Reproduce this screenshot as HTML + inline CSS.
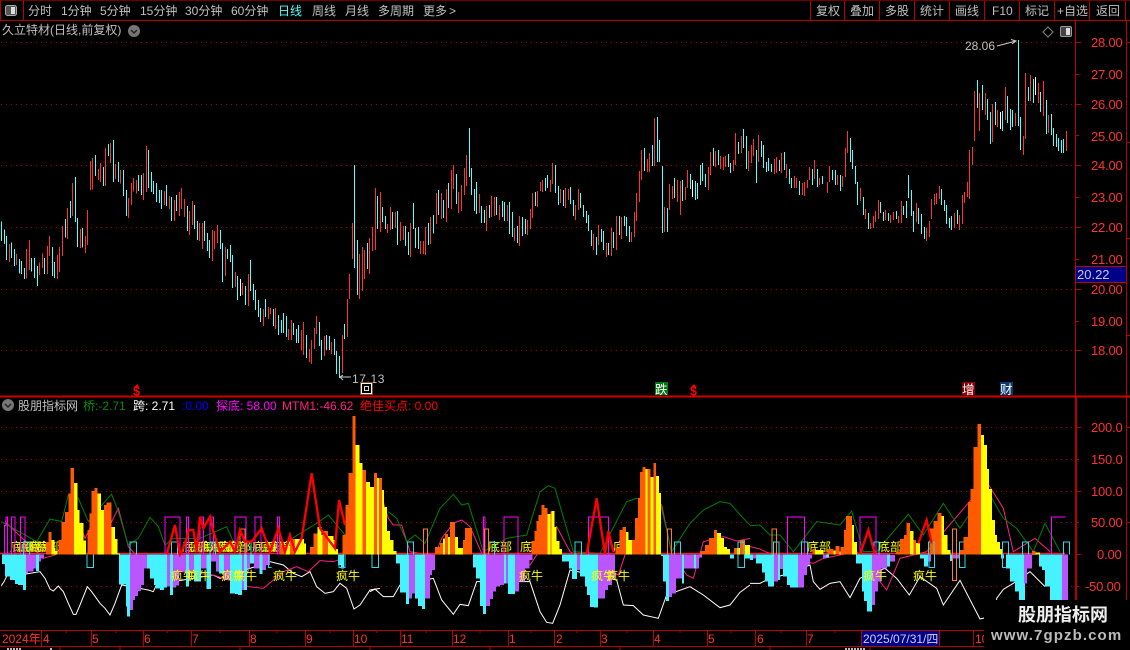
<!DOCTYPE html>
<html><head><meta charset="utf-8"><style>
html,body{margin:0;padding:0;background:#000;width:1130px;height:650px;overflow:hidden}
svg{display:block}
text{font-family:"Liberation Sans","WenQuanYi Zen Hei","Noto Sans CJK SC",sans-serif;font-size:12px}
.g{fill:#c0c0c0}.r{fill:#ff3232}.y{fill:#ffff00}
</style></head><body>
<svg width="1130" height="650" viewBox="0 0 1130 650" xmlns="http://www.w3.org/2000/svg">
<rect width="1130" height="650" fill="#000"/>
<!-- grid -->
<g stroke="#a00000" stroke-dasharray="1 4" fill="none">
<path d="M1 42.5H1075M1 104.5H1075M1 165.5H1075M1 227.5H1075M1 289.5H1075M1 350.5H1075M1 427.5H1075M1 459.5H1075M1 491.5H1075M1 522.5H1075M1 586.5H1075"/>
</g>
<!-- candles -->
<g fill="none" stroke-width="3" shape-rendering="crispEdges">
<g transform="translate(0,100) scale(.33333)">
<path stroke="#ff3232" d="M28 432V486M49 462V495M79 447V535M88 420V510M118 487V525M127 460V504M142 438V522M148 408V468M172 465V537M178 441V516M187 378V468M202 324V417M217 249V348M241 387V444M256 408V459M262 330V435M271 183V270M277 174V268M295 207V240M301 189V246M316 144V258M331 129V189M346 192V237M361 210V250M385 294V354M394 249V315M400 234V274M409 240V280M430 219V300M439 138V276M493 273V315M508 288V327M523 300V363M538 276V348M544 264V327M553 297V351M568 333V405M577 303V375M598 369V423M607 369V447M637 390V483M643 393V447M652 375V429M676 441V528M706 516V561M727 549V585M745 522V618M790 627V678M805 621V657M811 624V642M826 624V687M865 687V720M874 660V720M904 690V750M910 666V765M928 747V786M934 720V792M943 684V747M949 648V702M973 708V768M994 726V762M1027 705V819M1042 597V711M1048 522V597M1057 369V477M1078 462V597M1087 441V573M1093 450V537M1108 414V522M1117 381V453M1126 264V450"/>
<path stroke="#54ffff" d="M4 364V423M13 388V432M19 408V480M34 427V474M43 447V498M58 477V520M64 483V522M73 504V537M94 474V514M103 474V534M112 498V558M133 474V522M157 441V528M163 486V534M196 357V412M211 303V354M226 231V366M232 354V441M247 384V442M286 165V228M310 201V258M325 132V168M340 120V246M355 186V246M370 210V288M379 270V348M415 225V273M424 225V285M445 150V264M454 216V276M460 243V282M469 249V306M478 270V309M484 270V327M499 255V318M514 291V363M529 285V333M562 318V393M583 315V387M592 363V420M613 363V423M622 399V453M628 420V474M661 390V447M667 429V546M682 447V477M691 435V486M697 465V564M712 528V600M736 558V615M751 480V573M760 552V600M766 570V630M775 600V651M781 624V666M796 597V651M820 627V678M835 645V705M844 660V699M850 639V699M859 648V711M880 669V705M889 687V729M895 675V729M919 705V774M958 666V738M964 720V780M979 705V750M988 708V750M1003 717V765M1009 753V822M1018 768V834M1033 672V717M1063 195V504M1072 420V585M1102 429V507M1132 288V387"/>
<path stroke="#fff" d="M721 537V588"/>
</g>
<g transform="translate(370,100) scale(.33333)">
<path stroke="#ff3232" d="M31 276V396M52 372V399M61 321V390M76 336V384M91 366V423M100 378V420M121 369V471M151 423V462M160 423V462M166 381V465M181 351V432M199 279V372M214 279V357M229 267V366M244 210V327M250 195V267M265 276V339M274 255V333M283 204V285M289 165V258M328 282V339M349 318V393M364 288V351M373 291V348M388 315V360M412 315V363M433 384V423M448 348V438M472 360V405M481 327V387M487 279V354M502 273V321M511 246V273M517 240V276M541 240V276M547 189V252M571 267V309M586 264V324M595 267V300M616 315V360M625 267V330M670 402V450M685 375V435M709 429V471M724 384V468M739 348V450M754 351V417M784 396V426M793 336V411M799 279V363M808 213V306M814 150V240M832 177V216M838 159V216M853 54V198M883 321V396M898 252V330M907 258V297M922 240V306M931 243V345M946 261V300M952 210V264M1015 201V270M1021 156V225M1036 153V201M1051 168V207M1060 171V210M1066 168V201M1090 180V213M1096 99V195M1114 108V159M1135 153V213"/>
<path stroke="#54ffff" d="M37 321V366M46 348V387M67 336V387M82 333V435M106 378V438M115 396V465M130 309V387M136 384V444M145 381V447M175 369V435M190 345V400M205 270V345M220 300V354M235 249V324M259 222V312M298 84V231M304 204V285M313 267V333M319 246V342M334 318V369M343 330V369M358 315V354M379 291V345M397 303V351M403 306V363M418 306V402M427 336V411M442 378V429M457 351V408M466 357V402M496 276V318M526 234V273M532 225V264M556 195V279M565 258V315M580 270V318M601 261V312M610 300V348M631 279V324M640 315V351M649 333V369M655 345V393M664 390V438M679 411V465M694 387V426M700 393V450M715 429V465M730 396V444M748 348V405M763 348V378M769 351V408M778 378V426M823 144V213M847 135V198M862 51V186M868 120V186M877 198V399M892 324V396M913 234V294M937 240V303M961 222V267M976 243V300M982 249V297M991 195V255M997 189V243M1006 222V261M1030 144V198M1045 150V195M1075 162V201M1081 189V219M1105 126V162M1120 87V144M1129 108V207"/>
<path stroke="#fff" d="M967 240V291"/>
</g>
<g transform="translate(750,100) scale(.33333)">
<path stroke="#ff3232" d="M4 135V189M10 117V168M25 105V186M73 177V222M79 171V219M94 159V219M109 192V234M133 228V264M139 234V264M157 249V285M163 246V288M172 240V264M178 201V240M193 180V237M208 234V255M232 246V279M238 198V246M262 225V255M277 228V261M286 144V231M292 93V159M331 264V303M346 327V357M361 369V387M370 348V384M376 333V366M385 300V357M406 330V360M421 345V369M430 336V360M445 348V369M454 303V369M499 309V366M529 384V423M538 363V411M544 297V357M553 282V315M559 279V312M568 258V297M613 339V384M628 345V390M637 285V372M643 276V309M652 246V291M658 150V297M667 141V195M673 0V123"/>
<path stroke="#54ffff" d="M19 150V249M34 123V171M40 135V204M49 186V216M55 174V213M64 192V216M88 180V213M103 156V210M118 207V252M124 234V264M148 243V285M187 207V255M202 207V261M217 228V252M247 210V240M256 210V255M271 225V273M301 114V186M307 150V207M316 198V252M322 246V315M340 291V345M355 339V387M391 306V339M400 336V363M415 339V363M439 333V357M460 318V345M469 303V354M475 225V294M484 270V348M490 333V396M505 324V372M514 342V402M523 381V417M574 267V315M583 300V333M589 315V372M598 354V384M604 348V390M622 330V372"/>
</g>
<g transform="translate(960,30) scale(.33333)">
<path stroke="#ff3232" d="M44 183V333M58 189V303M76 189V255M97 222V336M112 240V291M136 171V270M166 249V288M190 318V375M196 129V327M211 135V213M235 159V219M250 153V258M265 255V309M319 303V363"/>
<path stroke="#54ffff" d="M52 150V234M67 165V240M82 207V270M91 246V342M106 216V285M127 243V303M142 198V279M151 237V300M157 240V291M175 30V288M181 261V360M205 171V213M220 147V219M241 186V246M259 210V312M274 252V315M280 294V348M289 312V351M295 324V363M304 330V369M310 327V369"/>
<path stroke="#fff" d="M121 246V297M226 141V195"/>
</g>
</g>
<!-- sub-panel underlay lines -->
<g fill="none" stroke-width="3">
<g transform="translate(0,395) scale(.33333)">
<path stroke="#ffffff" d="M4 572L12 560L22 540L60 540L120 530L135 550L150 582L160 588L175 573L190 590L205 625L220 658L228 658L240 630L262 575L275 590L300 625L315 640L330 660L345 625L365 570L445 585L460 590L470 568L640 540L660 550L810 500L850 510L880 535L905 545L930 530L950 575L975 595L1000 590L1020 565L1040 580L1062 642L1080 630L1110 585L1140 580"/>
<path stroke="#ff2080" d="M15 380L130 490L165 480L240 390L255 430L270 400L330 390L355 340L385 455L435 510L450 520L640 540L745 575L790 580L850 530L890 515L925 530L960 497L1000 500L1030 490"/>
<path stroke="#008000" d="M5 380L110 440L150 372L185 380L205 300L235 310L265 380L310 325L335 298L355 350L385 450L415 430L450 367L475 395L495 450L520 430L600 430L680 395L700 440L800 470L860 440L950 385L985 360L1035 420L1140 350"/>
</g>
<g transform="translate(370,395) scale(.33333)">
<path stroke="#ffffff" d="M0 590L15 582L40 605L70 605L90 570L190 550L215 615L250 658L270 628L295 632L320 560L480 560L510 650L530 682L548 685L570 630L600 525L740 555L760 630L790 632L820 660L865 670L890 600L960 575L1000 600L1050 638L1080 630L1110 592L1140 570"/>
<path stroke="#ff2080" d="M30 290L55 370L70 390L95 390L120 470L150 475L195 480L215 430L250 385L275 375L300 395L320 440L335 475L480 510L500 480L560 395L600 470L745 540L765 480L875 330L905 475L950 540L970 550L1000 440L1060 425L1100 438L1140 430"/>
<path stroke="#008000" d="M55 350L80 370L110 440L135 420L165 445L210 340L250 298L275 330L295 325L340 470L410 430L470 420L510 290L535 272L555 280L610 470L690 475L770 320L800 310L870 320L905 470L960 385L1000 345L1050 320L1080 325L1120 370L1140 390"/>
</g>
<g transform="translate(750,395) scale(.33333)">
<path stroke="#ffffff" d="M0 565L30 565L50 555L100 540L180 510L190 560L210 583L240 565L270 560L300 608L330 550L405 520L440 550L478 600L510 545L560 580L580 630L630 556L690 672L740 660L740 610L760 583L790 565L840 530L885 575"/>
<path stroke="#ff2080" d="M0 455L30 462L50 472L190 505L220 490L320 470L410 585L450 490L530 470L710 260L760 340L790 470L855 430L900 470"/>
<path stroke="#008000" d="M0 392L30 390L60 420L90 420L130 470L200 380L270 390L305 348L340 470L380 470L430 410L475 358L520 420L580 325L630 400L660 355L720 300L760 370L800 400L850 470L885 385L930 470"/>
</g>
</g>
<path d="M0 553.5H1065" stroke="#e8203c" stroke-width="1.5"/>
<!-- 底部 labels -->
<g class="y" fill="#ffff00">
<text x="10" y="551">底部</text><text x="18" y="551">底部</text><text x="29" y="551">底部</text><text x="37" y="551">底部</text>
<text x="182" y="551">底部</text><text x="190" y="551">底部</text><text x="200" y="551">底部</text><text x="210" y="551">底部</text><text x="218" y="551">底部</text><text x="227" y="551">底部</text>
<text x="252" y="551">底部</text><text x="260" y="551">底部</text><text x="267" y="551">底部</text><text x="280" y="551">底部</text>
<text x="488" y="551">底部</text><text x="520" y="551">底部</text><text x="613" y="551">底部</text><text x="807" y="551">底部</text><text x="878" y="551">底部</text>
</g>
<!-- bars -->
<g shape-rendering="crispEdges">
<g transform="translate(0,395) scale(.33333)">
<path fill="#ff5a00" d="M138 478V441H145V411H154V478zM175 478V435H185V381H195V351H205V295H212V219H222V478zM262 478V405H268V355H275V288H283V279H292V478zM312 478V330H320V322H335V478zM930 478V456H940V415H952V478zM840 478V450H853V478zM870 478V432H885V478zM968 478V408H984V478zM1028 478V420H1037V330H1046V234H1058V63H1067V478zM1088 478V225H1098V478zM1116 478V290H1122V234H1131V478z"/>
<path fill="#ffff00" d="M154 478V435H163V468H172V478zM222 478V264H232V345H238V384H250V437H258V478zM292 478V295H303V345H312V478zM335 478V396H345V432H352V475H360V478zM853 478V452H870V478zM885 478V432H912V445H918V478zM952 478V396H965V420H968V478zM984 478V423H1000V435H1006V462H1014V478zM1067 478V150H1078V204H1088V478zM1098 478V261H1110V279H1116V478zM1131 478V255H1140V478z"/>
<path fill="#46f2ff" d="M6 478V507H15V545H30V555H45V567H54V570H69V585H78V478zM108 478V528H117V478zM357 478V568H378V635H381V665H390V478zM441 478V520H450V550H462V570H468V580H480V585H492V578H501V478zM510 478V600H519V478zM558 478V575H567V478zM582 478V560H603V478zM620 478V582H633V478zM657 478V535H672V478zM690 478V595H705V597H714V600H726V478zM732 478V585H741V478zM750 478V505H762V478zM778 478V537H787V478zM1014 478V510H1023V520H1032V478z"/>
<path fill="#bb55ff" d="M78 478V535H84V530H100V520H108V478zM117 478V500H123V490H132V478zM390 478V645H399V615H405V603H414V588H423V570H432V520H441V478zM501 478V574H510V478zM519 478V578H528V572H537V530H558V478zM567 478V530H582V478zM603 478V520H620V478zM633 478V500H648V530H657V478zM672 478V555H690V478zM726 478V585H732V478zM741 478V520H750V478zM762 478V520H778V478zM787 478V525H798V510H810V478z"/>
</g>
<g transform="translate(370,395) scale(.33333)">
<path fill="#ff5a00" d="M12 478V234H21V478zM27 478V249H36V478zM195 478V456H210V444H219V478zM225 478V417H234V478zM240 478V381H255V478zM279 478V435H285V399H306V478zM485 478V438H494V408H500V378H506V360H514V330H523V339H532V478zM541 478V350H545V478zM737 478V459H749V405H758V396H768V478zM786 478V435H795V369H804V309H810V231H818V216H827V478zM833 478V222H842V478zM850 478V204H858V478zM990 478V468H1005V450H1017V429H1032V405H1041V478zM1092 478V459H1101V478zM1110 478V435H1125V478z"/>
<path fill="#ffff00" d="M0 478V276H12V478zM21 478V249H27V478zM36 478V285H42V336H51V408H60V435H70V468H79V478zM219 478V430H225V478zM234 478V426H240V478zM255 478V426H264V459H279V478zM532 478V357H541V478zM545 478V348H553V396H559V438H568V462H576V478zM768 478V411H776V435H786V478zM827 478V222H833V478zM842 478V246H850V478zM858 478V243H867V294H873V478zM1041 478V414H1053V429H1062V456H1071V462H1080V478zM1101 478V459H1110V478zM1125 478V450H1140V478z"/>
<path fill="#46f2ff" d="M78 478V505H90V592H108V627H117V478zM135 478V610H144V633H156V642H165V478zM309 478V518H318V550H330V633H339V657H348V478zM402 478V565H408V478zM414 478V597H435V478zM576 478V500H597V520H606V552H621V478zM630 478V545H645V575H651V600H660V636H672V638H684V478zM873 478V483H879V560H888V618H897V478zM936 478V566H942V478zM972 478V520H978V478zM1080 478V490H1092V478zM1125 478V490H1140V478z"/>
<path fill="#bb55ff" d="M117 478V610H126V595H135V478zM165 478V610H180V540H186V525H195V478zM348 478V633H360V612H369V590H378V575H390V570H402V478zM408 478V565H414V478zM435 478V590H447V560H465V520H478V495H487V478zM621 478V525H630V478zM684 478V610H705V585H714V570H726V550H735V478zM897 478V606H906V596H918V550H936V478zM942 478V520H972V478zM978 478V520H987V488H996V478z"/>
</g>
<g transform="translate(750,395) scale(.33333)">
<path fill="#ff5a00" d="M188 478V462H195V478zM232 478V462H250V478zM256 478V453H268V478zM272 478V456H282V405H288V363H306V478zM438 478V470H450V432H462V420H470V384H480V478zM490 478V435H498V478zM538 478V400H550V378H562V354H574V478zM630 478V465H640V426H654V321H662V282H670V156H682V87H693V478zM846 478V468H856V478z"/>
<path fill="#ffff00" d="M195 478V465H220V478zM250 478V466H256V478zM268 478V470H272V478zM306 478V390H312V441H321V478zM480 478V408H490V478zM498 478V444H510V478zM574 478V363H582V420H592V465H602V478zM693 478V120H702V150H711V222H717V282H726V375H735V420H741V441H750V462H756V478zM856 478V472H870V478z"/>
<path fill="#46f2ff" d="M0 478V495H9V478zM18 478V505H36V532H45V560H54V575H72V478zM84 478V555H90V478zM99 478V545H111V570H120V578H144V478zM228 478V488H237V478zM318 478V505H336V590H342V618H351V650H366V478zM411 478V515H420V478zM510 478V490H522V515H534V478zM600 478V498H609V478zM753 478V490H762V478zM768 478V520H780V560H795V590H807V615H825V478zM867 478V515H876V525H885V575H900V615H936V478z"/>
<path fill="#bb55ff" d="M9 478V490H18V478zM72 478V560H84V478zM90 478V522H99V478zM144 478V578H162V540H171V510H180V490H186V478zM219 478V490H228V478zM366 478V630H375V590H384V560H393V520H411V478zM420 478V500H435V480H420zM534 478V500H543V478zM609 478V490H627V478zM822 478V565H831V520H846V480H858V478zM936 478V615H954V478z"/>
</g>
</g>
<!-- outlines -->
<g fill="none" stroke-width="3" shape-rendering="crispEdges">
<g transform="translate(0,395) scale(.33333)">
<path stroke="#ff00ff" d="M14 478V392H18V366H22V478M34 478V366H45V478M62 478V366H75V478M495 478V366H540V478M560 478V366H565V478M600 478V366H610V478M630 478V366H640V478M705 478V366H738V478M765 478V366H783V478M833 478V366H838V478"/>
<path stroke="#2cdce8" d="M70 478V441H88V478M390 478V441H410V478M514 478V441H533V478M630 478V441H646V478M735 478V441H753V478M261 478V517H281V478M805 478V517H815M1017 478V517H1035V478M1116 478V517H1135V478"/>
<path stroke="#ff7f27" d="M720 478V402H735V478"/>
</g>
<g transform="translate(370,395) scale(.33333)">
<path stroke="#ff00ff" d="M340 478V366H345V478M402 478V366H444V478M655 478V366H716V478"/>
<path stroke="#2cdce8" d="M6 478V517H26V478M112 478V441H131V478M355 478V441H374V478M615 478V441H634V478M913 478V441H932V478M1104 478V441H1122V478M1104 478V517H1124V478"/>
<path stroke="#ff7f27" d="M160 478V402H172V478M343 478V402H355V478M892 478V402H904V478"/>
</g>
<g transform="translate(750,395) scale(.33333)">
<path stroke="#ff00ff" d="M112 478V366H163V478M330 478V366H378V478M905 478V366H946"/>
<path stroke="#2cdce8" d="M70 478V441H87V478M155 478V441H172V478M372 478V441H387V478M535 478V441H552V478M628 478V441H640M628 478V517H645V478M537 478V517H554V478M757 478V441H775V478M757 478V517H770M817 478V441H835V478M940 478V441H958V478"/>
<path stroke="#ff7f27" d="M66 478V402H80V478M607 402H620V556H607z"/>
</g>
</g>
<!-- red signal line -->
<g fill="none" stroke="#ff0000" stroke-width="7">
<g transform="translate(0,395) scale(.33333)">
<path d="M500 478L525 390L540 478L545 470L560 430L565 405L580 405L590 470L600 365L610 400L630 365L640 410L660 470L690 440L705 470L720 405L735 440L755 440L785 400L810 470L835 400L855 470L870 420L885 470L905 430L935 235L960 400L1005 460L1017 315L1035 390"/>
</g>
<g transform="translate(370,395) scale(.33333)">
<path d="M650 478L680 310L705 478L715 408L730 470"/>
</g>
<g transform="translate(750,395) scale(.33333)">
<path d="M330 478L355 405L375 478M505 445L530 375L545 445"/>
</g>
</g>
<!-- 疯牛 -->
<g fill="#ffff00">
<text x="171" y="580">疯牛</text><text x="187" y="580">疯牛</text><text x="221" y="580">疯牛</text><text x="233" y="580">疯牛</text><text x="273" y="580">疯牛</text><text x="336" y="580">疯牛</text>
<text x="519" y="580">疯牛</text><text x="591" y="580">疯牛</text><text x="606" y="580">疯牛</text><text x="863" y="580">疯牛</text><text x="913" y="580">疯牛</text>
</g>
<!-- frame -->
<g fill="none" stroke="#b80000" shape-rendering="crispEdges">
<path d="M0 20.5H1130M23.5 0V20.5M810.5 0V20.5M844.5 0V20.5M879.5 0V20.5M914.5 0V20.5M949.5 0V20.5M984.5 0V20.5M1019.5 0V20.5M1054.5 0V20.5M1089.5 0V20.5M1125.5 0V20.5M.5 0V20.5"/>
<path d="M1075.5 21V646M1126.5 21V650M1076.5 396V646M0 630.5H1130M0 646.5H1130"/>
<path d="M0 396.5H1130" stroke-width="2" stroke="#d00000"/>
<path d="M0 .5H1130" stroke="#700000"/>
<path d="M41.5 630V646M91.5 630V646M143.5 630V646M191.5 630V646M249.5 630V646M305.5 630V646M353.5 630V646M400.5 630V646M452.5 630V646M508.5 630V646M554.5 630V646M600.5 630V646M653.5 630V646M707.5 630V646M755.5 630V646M806.5 630V646M861.5 630V646M939.5 630V646M973.5 630V646"/>
<path d="M66 630V633M116 630V633M167 630V633M220 630V633M277 630V633M330 630V633M377 630V633M426 630V633M480 630V633M531 630V633M577 630V633M627 630V633M680 630V633M731 630V633M781 630V633M835 630V633M900 630V633M1000 630V633M60 646V650M120 646V650M240 646V650M370 646V650M490 646V650M620 646V650M770 646V650M870 646V650"/>
<path d="M1075 42.5H1081M1075 74.5H1079M1075 104.5H1081M1075 135.5H1079M1075 165.5H1081M1075 197.5H1079M1075 227.5H1081M1075 259.5H1079M1075 289.5H1081M1075 321.5H1079M1075 350.5H1081M1075 427.5H1081M1075 459.5H1079M1075 491.5H1081M1075 522.5H1079M1075 554.5H1081M1075 586.5H1079"/>
<path d="M1127 42.5H1130M1127 142.5H1130M1127 238.5H1130M1127 335.5H1130M1127 427.5H1130M1127 522.5H1130"/>
</g>
<!-- price box -->
<rect x="1075.5" y="266.5" width="51" height="16" fill="#000088" stroke="#c00000"/>
<text x="1077" y="279" fill="#c8c8e8" style="font-size:13px">20.22</text>
<!-- axis labels -->
<g class="r" style="letter-spacing:-.2px">
<text x="1091" y="47" style="font-size:13px">28.00</text><text x="1091" y="79" style="font-size:13px">27.00</text><text x="1091" y="109" style="font-size:13px">26.00</text><text x="1091" y="141" style="font-size:13px">25.00</text><text x="1091" y="170" style="font-size:13px">24.00</text><text x="1091" y="202" style="font-size:13px">23.00</text><text x="1091" y="232" style="font-size:13px">22.00</text><text x="1091" y="264" style="font-size:13px">21.00</text><text x="1091" y="294" style="font-size:13px">20.00</text><text x="1091" y="326" style="font-size:13px">19.00</text><text x="1091" y="355" style="font-size:13px">18.00</text>
<text x="1091" y="432" style="font-size:13px">200.0</text><text x="1091" y="464" style="font-size:13px">150.0</text><text x="1091" y="496" style="font-size:13px">100.0</text><text x="1091" y="527" style="font-size:13px">50.00</text><text x="1097" y="559" style="font-size:13px">0.00</text><text x="1085" y="591" style="font-size:13px">-50.00</text>
</g>
<!-- top toolbar -->
<rect x="5.5" y="5.5" width="11" height="10" rx="2" fill="#555" stroke="#aaa"/><rect x="11" y="7" width="4" height="7" fill="#ddd"/>
<g class="g">
<text x="28" y="15">分时</text><text x="61" y="15">1分钟</text><text x="100" y="15">5分钟</text><text x="140" y="15">15分钟</text><text x="185" y="15">30分钟</text><text x="231" y="15">60分钟</text>
<text x="278" y="15" style="fill:#54ffff">日线</text><text x="312" y="15">周线</text><text x="345" y="15">月线</text><text x="378" y="15">多周期</text><text x="423" y="15">更多</text><text x="449" y="15">&gt;</text>
<text x="816" y="15">复权</text><text x="850" y="15">叠加</text><text x="885" y="15">多股</text><text x="920" y="15">统计</text><text x="955" y="15">画线</text><text x="992" y="15">F10</text><text x="1025" y="15">标记</text><text x="1057" y="15">+自选</text><text x="1096" y="15">返回</text>
<text x="2" y="34">久立特材(日线,前复权)</text>
</g>
<circle cx="134" cy="31" r="6" fill="#777"/><path d="M131 30l3 3 3-3" stroke="#222" stroke-width="1.4" fill="none"/>
<path d="M1048 27l5 5-5 5-5-5z" fill="none" stroke="#888"/>
<rect x="1060.5" y="26.5" width="11" height="10" rx="1.5" fill="#444" stroke="#999"/><rect x="1066" y="28" width="4" height="7" fill="#ddd"/>
<!-- annotations -->
<text x="965" y="50" class="g">28.06</text>
<path d="M997 46L1016 41M1011 39.5l5 1.5-4 3" stroke="#ccc" fill="none"/>
<text x="352" y="383" class="g" style="letter-spacing:.6px">17.13</text>
<path d="M340 377H351M343 375l-3 2 3 3" stroke="#ccc" fill="none"/>
<!-- markers -->
<rect x="360" y="382" width="13" height="13" fill="#8a4a10"/><rect x="361.5" y="383.5" width="10" height="10" fill="#000" stroke="#fff"/><rect x="364.5" y="386.5" width="4" height="4" fill="none" stroke="#ddd"/>
<path d="M137 384l2.5 3h-5zM694 384l2.5 3h-5z" fill="#ff0000"/>
<text x="133" y="395.5" style="fill:#ff0000;font-size:12.5px;font-weight:bold">$</text>
<text x="690" y="395.5" style="fill:#ff0000;font-size:12.5px;font-weight:bold">$</text>
<rect x="655" y="382" width="13" height="13" fill="#007a10"/><text x="655" y="394" style="fill:#fff;font-size:12.5px">跌</text>
<rect x="962" y="382" width="13" height="13" fill="#8a0000"/><text x="962" y="394" style="fill:#fff;font-size:12.5px">增</text>
<rect x="1000" y="382" width="13" height="13" fill="#0a3a70"/><text x="1000" y="394" style="fill:#fff;font-size:12.5px">财</text>
<!-- sub-panel header -->
<circle cx="8" cy="405" r="6" fill="#777"/><path d="M5 404l3 3 3-3" stroke="#222" stroke-width="1.4" fill="none"/>
<text x="18" y="410" class="g">股朋指标网</text>
<text x="83" y="410" fill="#008a00">桥:-2.71</text>
<text x="133" y="410" fill="#fff">跨: 2.71</text>
<text x="182" y="410" fill="#0000ff">:0.00</text>
<text x="216" y="410" fill="#ff00ff">探底: 58.00</text>
<text x="282" y="410" fill="#ff2080">MTM1:-46.62</text>
<text x="360" y="410" fill="#ff0000">绝佳买点: 0.00</text>
<!-- time axis -->
<rect x="862" y="631" width="77" height="15" fill="#000088"/>
<g class="r" style="font-size:13px">
<text x="2" y="643">2024年</text><text x="43" y="643">4</text><text x="92" y="643">5</text><text x="144" y="643">6</text><text x="192" y="643">7</text><text x="250" y="643">8</text><text x="306" y="643">9</text><text x="354" y="643">10</text><text x="401" y="643">11</text><text x="453" y="643">12</text><text x="509" y="643">1</text><text x="556" y="643">2</text><text x="601" y="643">3</text><text x="654" y="643">4</text><text x="708" y="643">5</text><text x="757" y="643">6</text><text x="807" y="643">7</text><text x="975" y="643">10</text>
</g>
<text x="863" y="643" fill="#d0d0f0">2025/07/31/四</text>
<path d="M7 649h15M50 649h3M845 649h20" stroke="#bbb" stroke-width="2" stroke-dasharray="2 1"/>
<!-- watermark -->
<rect x="984" y="600" width="146" height="50" fill="#000"/>
<text x="1018" y="621" style="font-size:18px;font-weight:bold;fill:#eee">股朋指标网</text>
<text x="991" y="640" style="font-size:15px;font-weight:bold;fill:#bbb;letter-spacing:1.1px">www.7gpzb.com</text>
</svg>
</body></html>
